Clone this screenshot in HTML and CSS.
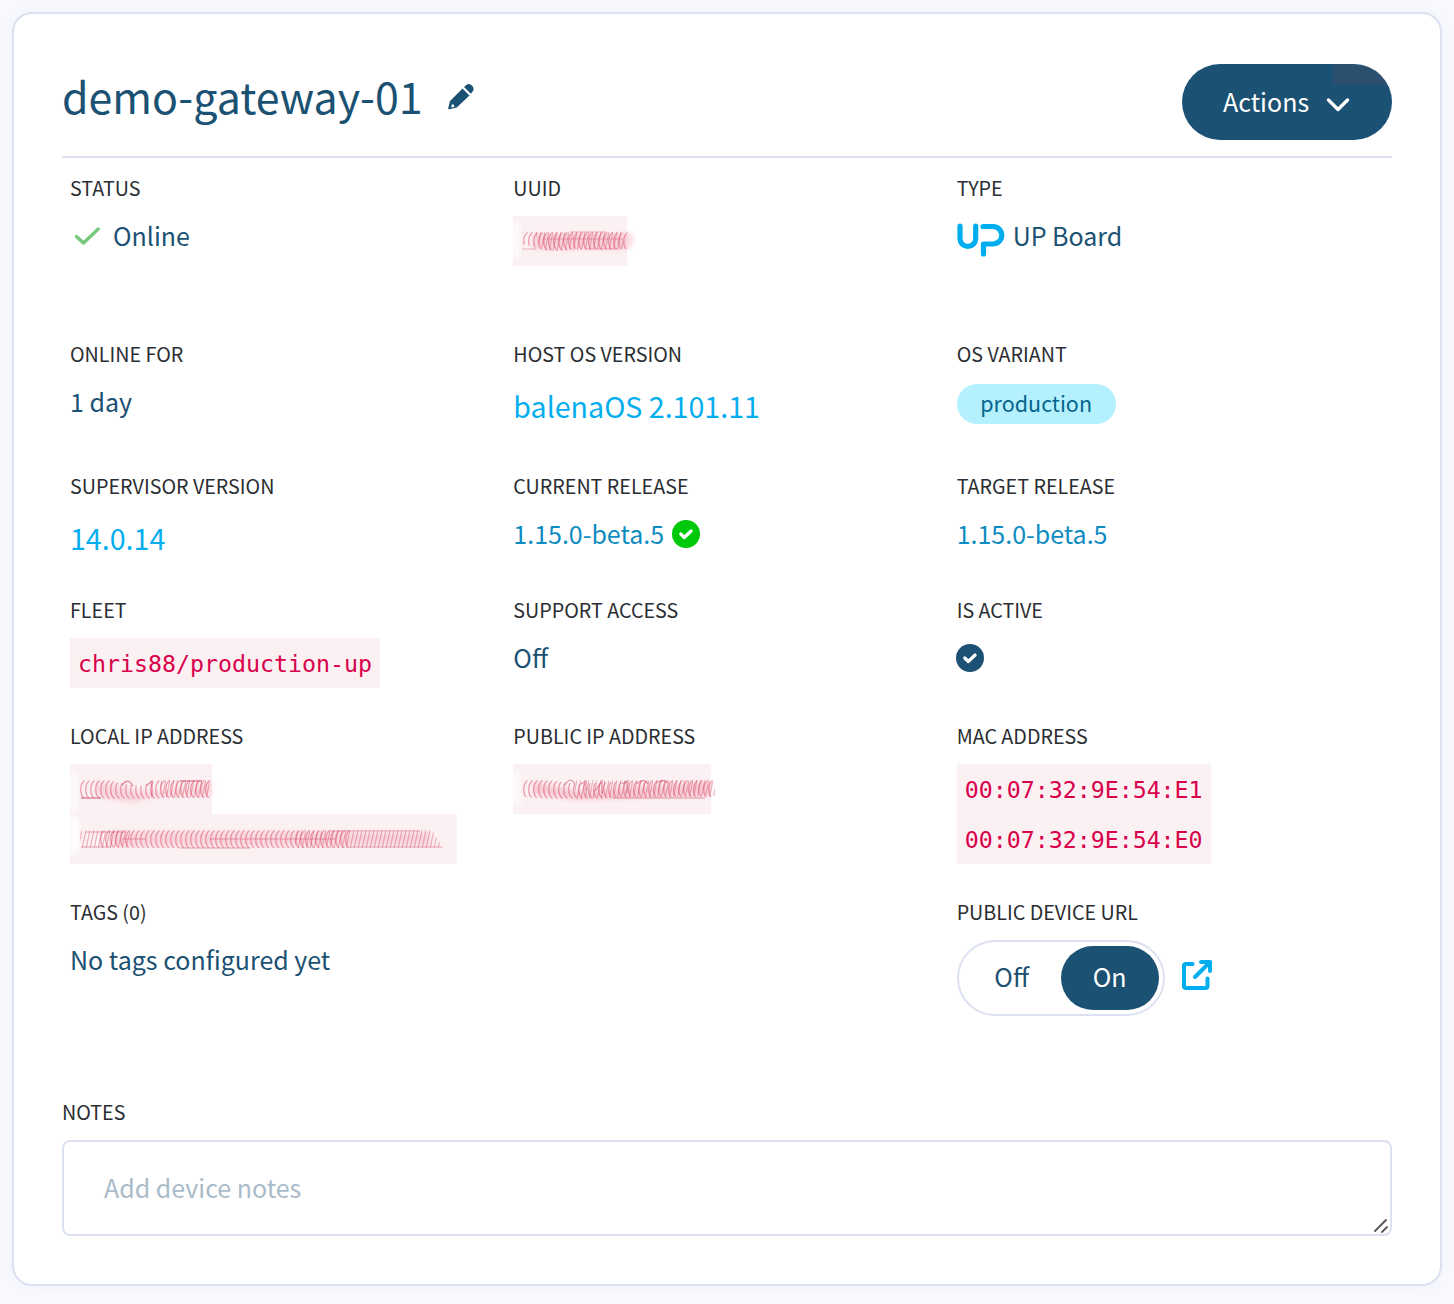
FILE: index.html
```html
<!DOCTYPE html>
<html lang="en">
<head>
<meta charset="utf-8">
<title>demo-gateway-01</title>
<link rel="stylesheet" href="styles.css">
</head>
<body>
<svg class="defs" width="0" height="0" aria-hidden="true">
  <defs>
    <pattern id="loops" y="14" width="5" height="24" patternUnits="userSpaceOnUse">
      <path d="M4.500 2.500C-.5 6 -.5 17 4.500 20.500" fill="none" stroke="#e0526f" stroke-width="1.300" opacity=".55"/>
    </pattern>
    <pattern id="slants" y="14" width="4" height="24" patternUnits="userSpaceOnUse">
      <path d="M4 2L0 21" fill="none" stroke="#dd5570" stroke-width="1.100" opacity=".45"/>
    </pattern>
    <filter id="soft" x="-10%" y="-30%" width="120%" height="160%"><feGaussianBlur stdDeviation=".6"/></filter>
    <filter id="haze" x="-20%" y="-50%" width="140%" height="200%"><feGaussianBlur stdDeviation="2.500"/></filter>
  </defs>
</svg>
<main class="card">
  <header class="head">
    <h1 class="title">demo-gateway-01</h1>
    <svg class="pencil" width="26" height="26" viewBox="0 0 26 26"><path fill="#1b5172" d="M14.500 4.600l7 7L8.700 23.400 1.200 25.200Q0 25.500.2 24.200L2 17zM16 3l2-1.800q3-2.500 6 .4 3 3.100.4 6.200L22.800 9.800z"/><path d="M3.800 20.300l2.200.5.400 1.900-3.100.7z" fill="#fff"/></svg>
    <button class="actions"><span>Actions</span>
      <svg width="24" height="16" viewBox="0 0 24 16"><path d="M2.500 3L12 12.500 21.500 3" fill="none" stroke="#fff" stroke-width="3.400" stroke-linecap="round" stroke-linejoin="round"/></svg>
    </button>
  </header>

  <section class="grid">
    <div class="cell"><div class="label">STATUS</div>
      <div class="value status"><svg width="26" height="20" viewBox="0 0 26 20"><path d="M1.500 10.500l7 6.500L23.200 3" fill="none" stroke="#76c97d" stroke-width="3.400" stroke-linecap="round" stroke-linejoin="round"/></svg>Online</div></div>
    <div class="cell"><div class="label">UUID</div>
      <div class="code redacted uuid"><svg class="smudge" width="130" height="50"><path d="M0 8h7v34H0z" fill="#fff" opacity=".7" filter="url(#haze)"/><path d="M20 18h92q8-4 8 5t-6 10H20z" fill="#ee8fa3" opacity=".33" filter="url(#haze)"/><g filter="url(#soft)"><path d="M9 15h45l3-1h58v19H62q-16 4-31 1L9 28z" fill="url(#loops)"/><path d="M20 15h90v18l-80 2z" fill="url(#slants)"/><path d="M9 33h14M30 23h80M72 33h34M57 16h36" stroke="#dc5b75" stroke-width="1" opacity=".45"/></g></svg></div></div>
    <div class="cell"><div class="label">TYPE</div>
      <div class="value board"><svg width="48" height="36" viewBox="0 0 48 36"><path d="M3 4v12.500a7.850 7.850 0 0 0 15.700 0V4M26 4.500h10a8.700 8.700 0 0 1 0 17.500H26.500V32" fill="none" stroke="#00aeef" stroke-width="5.200" stroke-linecap="round" stroke-linejoin="round"/></svg>UP Board</div></div>

    <div class="cell"><div class="label">ONLINE FOR</div><div class="value">1 day</div></div>
    <div class="cell"><div class="label">HOST OS VERSION</div><a class="value version">balenaOS 2.101.11</a></div>
    <div class="cell"><div class="label">OS VARIANT</div><span class="pill">production</span></div>

    <div class="cell"><div class="label">SUPERVISOR VERSION</div><a class="value version">14.0.14</a></div>
    <div class="cell"><div class="label">CURRENT RELEASE</div>
      <div class="value release">1.15.0-beta.5<svg class="badge" width="28" height="28" viewBox="0 0 28 28"><circle cx="14" cy="14" r="14" fill="#00c80a"/><path d="M8.800 14l3.500 3.500 6.800-6.500" fill="none" stroke="#fff" stroke-width="3.200" stroke-linecap="round" stroke-linejoin="round"/></svg></div></div>
    <div class="cell"><div class="label">TARGET RELEASE</div><div class="value release">1.15.0-beta.5</div></div>

    <div class="cell"><div class="label">FLEET</div><code class="code">chris88/production-up</code></div>
    <div class="cell"><div class="label">SUPPORT ACCESS</div><div class="value">Off</div></div>
    <div class="cell"><div class="label">IS ACTIVE</div><svg class="active" width="28" height="28" viewBox="0 0 28 28"><circle cx="14" cy="14" r="14" fill="#1b5172"/><path d="M8.800 14l3.500 3.500 6.800-6.500" fill="none" stroke="#fff" stroke-width="3.200" stroke-linecap="round" stroke-linejoin="round"/></svg></div>

    <div class="cell"><div class="label">LOCAL IP ADDRESS</div>
      <div class="code redacted local-a"><svg class="smudge" width="160" height="50"><path d="M0 8h7v40H0z" fill="#fff" opacity=".7" filter="url(#haze)"/><path d="M26 18q20 3 38 8t78-8v14q-55-3-78 7-20-2-38-8z" fill="#ee8fa3" opacity=".28" filter="url(#haze)"/><g filter="url(#soft)"><path d="M10 16h28q18 5 34 6l16-6h52v18H94q-28 5-42 3T10 34z" fill="url(#loops)"/><path d="M90 15h50v18H90z" fill="url(#slants)"/><path d="M11 34h20M110 17h22M52 21q6-8 11 1M76 22l6-5v16" fill="none" stroke="#d04d6b" stroke-width="1.300" opacity=".6"/></g></svg></div>
      <div class="code redacted local-b"><svg class="smudge" width="387" height="50"><path d="M0 4h9v34H0z" fill="#fff" opacity=".9" filter="url(#haze)"/><path d="M40 18h320v14H40z" fill="#ee8fa3" opacity=".28" filter="url(#haze)"/><g filter="url(#soft)"><path d="M30 16h80l50-2 60 2h60v18H80l-50-1z" fill="url(#loops)"/><path d="M10 16h50v18H10zM225 16h137l11 18H225z" fill="url(#slants)"/><path d="M11 33h30M52 25h24M140 25h50M190 25h75M110 34h70M280 33h92M16 18h40M260 17h90" stroke="#d04d6b" stroke-width="1.100" opacity=".45"/></g></svg></div></div>
    <div class="cell"><div class="label">PUBLIC IP ADDRESS</div>
      <div class="code redacted public"><svg class="smudge" width="214" height="50"><path d="M0 8h7v34H0z" fill="#fff" opacity=".7" filter="url(#haze)"/><path d="M20 18l45 9 133-9v13l-133 5-45-6z" fill="#ee8fa3" opacity=".38" filter="url(#haze)"/><g filter="url(#soft)"><path d="M10 15h20l32 5 75-4h62v17h-94q-32 5-55 3T10 33z" fill="url(#loops)"/><path d="M62 16h140v16l-140 3z" fill="url(#slants)"/><path d="M52 21q5-9 10-1M68 20l5-3v10M82 27l7-10v12M109 20l5-3v12M124 20q6-7 11 0M144 19q6-5 11 0M100 34h92" fill="none" stroke="#d04d6b" stroke-width="1.200" opacity=".6"/></g></svg></div></div>
    <div class="cell"><div class="label">MAC ADDRESS</div><code class="code">00:07:32:9E:54:E1</code><code class="code">00:07:32:9E:54:E0</code></div>

    <div class="cell wide"><div class="label">TAGS (0)</div><div class="value">No tags configured yet</div></div>
    <div class="cell"><div class="label">PUBLIC DEVICE URL</div>
      <div class="url"><div class="toggle"><span class="off">Off</span><span class="on">On</span></div>
      <svg width="32" height="32" viewBox="0 0 32 32"><g fill="none" stroke="#00aeef" stroke-width="4" stroke-linecap="round" stroke-linejoin="round"><path d="M11.500 5H5a2 2 0 0 0-2 2v20a2 2 0 0 0 2 2h19.500a2 2 0 0 0 2-2v-7.500M14 18L27 5"/><path d="M20 3h9v9"/></g><path d="M22 2h9v9z" fill="#00aeef"/></svg></div></div>
  </section>

  <section class="notes">
    <label class="label" for="notes">NOTES</label>
    <div class="field">
      <textarea id="notes" placeholder="Add device notes"></textarea>
      <svg class="grip" width="16" height="16" viewBox="0 0 16 16"><path d="M2 13L13 2M9 14l5-5" stroke="#555" stroke-width="1.800" stroke-linecap="round"/></svg>
    </div>
  </section>
</main>
</body>
</html>
```
FILE: styles.css
```css
* { box-sizing: border-box; }
body {
  margin: 0;
  padding: 12px;
  height: 1304px;
  background: #f9fafe;
  color: #1b5172;
  font: 25px/38px "Noto Sans CJK SC", sans-serif;
}
.defs { position: absolute; }
svg { flex: none; display: block; }
.card {
  height: 1274px;
  padding: 50px 48px;
  background: #fff;
  border: 2px solid #dce1f2;
  border-radius: 20px;
  box-shadow: 0 0 20px rgba(90, 110, 200, .06);
}
.head {
  display: flex;
  height: 94px;
  border-bottom: 2px solid #dce1f2;
}
.title { margin: 0; font-size: 42.900px; line-height: 63px; font-weight: 400; white-space: nowrap; }
.pencil { margin: 20px 0 0 25px; }
.actions {
  display: flex;
  align-items: center;
  width: 210px;
  height: 76px;
  margin-left: auto;
  padding: 0 0 0 41px;
  gap: 17px;
  border: 0;
  border-radius: 38px;
  color: #fff;
  font: inherit;
  background: linear-gradient(#2b506f, #2b506f) 151px 0 / 59px 21px no-repeat #1b5172;
}
.actions span { padding-bottom: 3px; }
.actions svg { margin-top: 5px; }
.grid {
  display: grid;
  grid-template-columns: repeat(3, 1fr);
  grid-template-rows: 166px 132px 124px 126px 176px 200px;
  padding-top: 14px;
}
.cell { padding-left: 8px; }
.wide { grid-column: span 2; }
.label {
  display: block;
  height: 44px;
  color: #2a2d31;
  font-size: 19.700px;
  line-height: 31px;
}
.value { display: flex; }
.status { gap: 12px; padding-left: 5px; }
.status svg { margin-top: 10px; }
.board { gap: 8px; }
.board svg { margin-top: 6px; }
.version { color: #00aeef; font-size: 28.600px; line-height: 47px; }
.release { color: #0d8cc1; }
.badge { margin: 6px 0 0 8px; }
.active { margin: 6px 0 0 -1px; }
.pill {
  display: block;
  width: 159px;
  height: 40px;
  margin-top: 2px;
  border-radius: 20px;
  background: #b5f0ff;
  color: #05668c;
  font-size: 21.500px;
  line-height: 37px;
  text-align: center;
}
.code {
  display: block;
  width: max-content;
  height: 50px;
  padding: 0 8px;
  background: #fbf1f3;
  color: #d9004c;
  font: 23.255px/52px "DejaVu Sans Mono", monospace;
}
.redacted { position: relative; padding: 0; }
.smudge { position: absolute; left: 0; top: 0; }
.uuid { width: 114px; }
.local-a { width: 142px; }
.local-b { width: 387px; }
.public { width: 198px; }
.url { display: flex; gap: 16px; }
.url > svg { margin-top: 19px; }
.toggle {
  display: flex;
  width: 208px;
  height: 76px;
  padding: 4px;
  border: 2px solid #dce1f2;
  border-radius: 38px;
  line-height: 60px;
}
.off { width: 98px; text-align: center; }
.on { width: 98px; height: 64px; border-radius: 32px; background: #1b5172; color: #fff; text-align: center; }
.field { position: relative; height: 96px; }
textarea {
  display: block;
  width: 100%;
  height: 96px;
  padding: 26px 40px;
  border: 2px solid #dce1f2;
  border-radius: 8px;
  resize: none;
  background: #fff;
  font: inherit;
  overflow: hidden;
}
textarea::placeholder { color: #a9bbc9; opacity: 1; }
.grip { position: absolute; right: 3px; bottom: 2px; }
```
